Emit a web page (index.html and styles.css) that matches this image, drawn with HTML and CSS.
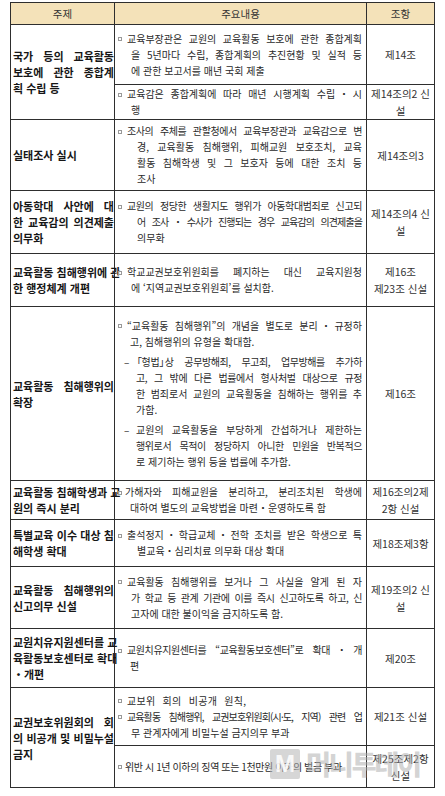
FILE: index.html
```html
<!DOCTYPE html>
<html lang="ko">
<head>
<meta charset="utf-8">
<title>교권보호 개정 주요내용</title>
<link rel="stylesheet" href="styles.css">
</head>
<body>
<div class="page">
<table class="law">
  <colgroup><col class="c1"><col class="c2"><col class="c3"></colgroup>
  <thead>
    <tr><th>주제</th><th>주요내용</th><th>조항</th></tr>
  </thead>
  <tbody>
    <tr class="r1a">
      <td class="topic" rowspan="2">
        <span class="ln j">국가 등의 교육활동</span>
        <span class="ln j">보호에 관한 종합계</span>
        <span class="ln">획 수립 등</span>
      </td>
      <td class="body">
        <span class="ln j"><i class="bl"></i>교육부장관은 교원의 교육활동 보호에 관한 종합계획</span>
        <span class="ln j ind">을 5년마다 수립, 종합계획의 추진현황 및 실적 등</span>
        <span class="ln ind">에 관한 보고서를 매년 국회 제출</span>
      </td>
      <td class="art">제14조</td>
    </tr>
    <tr class="r1b sub">
      <td class="body">
        <span class="ln j"><i class="bl"></i>교육감은 종합계획에 따라 매년 시행계획 수립・시</span>
        <span class="ln ind">행</span>
      </td>
      <td class="art">제14조의2 신<br>설</td>
    </tr>
    <tr class="r2">
      <td class="topic"><span class="ln">실태조사 실시</span></td>
      <td class="body">
        <span class="ln j t1"><i class="bl"></i>조사의 주체를 관할청에서 교육부장관과 교육감으로 변</span>
        <span class="ln j ind2">경, 교육활동 침해행위, 피해교원 보호조치, 교육</span>
        <span class="ln j ind2">활동 침해학생 및 그 보호자 등에 대한 조치 등</span>
        <span class="ln ind2">조사</span>
      </td>
      <td class="art">제14조의3</td>
    </tr>
    <tr class="r3">
      <td class="topic">
        <span class="ln j">아동학대 사안에 대</span>
        <span class="ln j">한 교육감의 의견제출</span>
        <span class="ln">의무화</span>
      </td>
      <td class="body">
        <span class="ln j t1"><i class="bl"></i>교원의 정당한 생활지도 행위가 아동학대범죄로 신고되</span>
        <span class="ln j ind2 t2">어 조사・수사가 진행되는 경우 교육감의 의견제출을</span>
        <span class="ln ind2">의무화</span>
      </td>
      <td class="art">제14조의4 신<br>설</td>
    </tr>
    <tr class="r4">
      <td class="topic">
        <span class="ln j">교육활동 침해행위에 관</span>
        <span class="ln">한 행정체계 개편</span>
      </td>
      <td class="body">
        <span class="ln j"><i class="bl"></i>학교교권보호위원회를 폐지하는 대신 교육지원청</span>
        <span class="ln ind">에 ‘지역교권보호위원회’를 설치함.</span>
      </td>
      <td class="art">제16조<br>제23조 신설</td>
    </tr>
    <tr class="r5">
      <td class="topic">
        <span class="ln j">교육활동 침해행위의</span>
        <span class="ln">확장</span>
      </td>
      <td class="body">
        <div class="para">
          <span class="ln j"><i class="bl"></i>“교육활동 침해행위”의 개념을 별도로 분리・규정하</span>
          <span class="ln ind3">고, 침해행위의 유형을 확대함.</span>
        </div>
        <div class="para dash">
          <span class="ln j t1"><i class="dh">–</i><span class="lb">「</span>형법<span class="rb">」</span>상 공무방해죄, 무고죄, 업무방해를 추가하</span>
          <span class="ln j ind4 t1">고, 그 밖에 다른 법률에서 형사처벌 대상으로 규정</span>
          <span class="ln j ind4">한 범죄로서 교원의 교육활동을 침해하는 행위를 추</span>
          <span class="ln ind4">가함.</span>
        </div>
        <div class="para dash">
          <span class="ln j"><i class="dh">–</i>교원의 교육활동을 부당하게 간섭하거나 제한하는</span>
          <span class="ln j ind4 t1">행위로서 목적이 정당하지 아니한 민원을 반복적으</span>
          <span class="ln ind4">로 제기하는 행위 등을 법률에 추가함.</span>
        </div>
      </td>
      <td class="art">제16조</td>
    </tr>
    <tr class="r6">
      <td class="topic">
        <span class="ln j">교육활동 침해학생과 교</span>
        <span class="ln">원의 즉시 분리</span>
      </td>
      <td class="body">
        <span class="ln j"><i class="bl sm"></i>가해자와 피해교원을 분리하고, 분리조치된 학생에</span>
        <span class="ln ind3">대하여 별도의 교육방법을 마련・운영하도록 함</span>
      </td>
      <td class="art">제16조의2제<br>2항 신설</td>
    </tr>
    <tr class="r7">
      <td class="topic">
        <span class="ln j">특별교육 이수 대상 침</span>
        <span class="ln">해학생 확대</span>
      </td>
      <td class="body">
        <span class="ln j"><i class="bl"></i>출석정지・학급교체・전학 조치를 받은 학생으로 특</span>
        <span class="ln ind2">별교육・심리치료 의무화 대상 확대</span>
      </td>
      <td class="art">제18조제3항</td>
    </tr>
    <tr class="r8">
      <td class="topic">
        <span class="ln j">교육활동 침해행위의</span>
        <span class="ln">신고의무 신설</span>
      </td>
      <td class="body">
        <span class="ln j"><i class="bl"></i>교육활동 침해행위를 보거나 그 사실을 알게 된 자</span>
        <span class="ln j ind t1">가 학교 등 관계 기관에 이를 즉시 신고하도록 하고, 신</span>
        <span class="ln ind">고자에 대한 불이익을 금지하도록 함.</span>
      </td>
      <td class="art">제19조의2 신<br>설</td>
    </tr>
    <tr class="r9">
      <td class="topic">
        <span class="ln j">교원치유지원센터를 교</span>
        <span class="ln j">육활동보호센터로 확대</span>
        <span class="ln">・개편</span>
      </td>
      <td class="body">
        <span class="ln j t1"><i class="bl"></i>교원치유지원센터를 “교육활동보호센터”로 확대・개</span>
        <span class="ln ind3">편</span>
      </td>
      <td class="art">제20조</td>
    </tr>
    <tr class="r10a">
      <td class="topic" rowspan="2">
        <span class="ln j">교권보호위원회의 회</span>
        <span class="ln j">의 비공개 및 비밀누설</span>
        <span class="ln">금지</span>
      </td>
      <td class="body">
        <span class="ln wide"><i class="bl"></i>교보위 회의 비공개 원칙,</span>
        <span class="ln j t2"><i class="bl"></i>교육활동 침해행위, 교권보호위원회(시·도, 지역) 관련 업</span>
        <span class="ln ind">무 관계자에게 비밀누설 금지의무 부과</span>
      </td>
      <td class="art">제21조 신설</td>
    </tr>
    <tr class="r10b sub">
      <td class="body">
        <span class="ln t1"><i class="bl sm"></i>위반 시 1년 이하의 징역 또는 1천만원 이하의 벌금 부과</span>
      </td>
      <td class="art">제25조제2항<br>신설</td>
    </tr>
  </tbody>
</table>
<div class="mark"><span class="mark-box">M</span><span class="mark-text">머니투데이</span></div>
</div>
</body>
</html>
```

FILE: styles.css
```css
html, body {
  margin: 0;
  padding: 0;
  background: #ffffff;
}
body {
  font-family: "Noto Sans CJK KR", "Noto Sans", sans-serif;
  color: #222;
}
.page {
  position: relative;
  width: 445px;
  height: 796px;
  padding: 2px 0 0 10px;
  box-sizing: border-box;
}
.law {
  border-collapse: collapse;
  table-layout: fixed;
  width: 424px;
  font-size: 10px;
  line-height: 16px;
}
.c1 { width: 104px; }
.c2 { width: 252px; }
.c3 { width: 68px; }

.law th, .law td {
  border: 1px solid #2e2e2e;
  padding: 0;
  vertical-align: middle;
}
.law th {
  height: 21px;
  background: #f4e2b9;
  font-weight: normal;
  color: #333;
  font-size: 10.5px;
  text-align: center;
}
.law tr.sub td {
  border-top: 1px dotted #555;
}
.topic {
  padding: 0 0 0 2px !important;
  font-weight: bold;
  font-size: 11px;
  color: #161616;
  white-space: nowrap;
}
.body {
  padding: 0 4px 0 2px !important;
  color: #2a2a2a;
}
.art {
  text-align: center;
  color: #333;
  font-size: 10.5px;
  line-height: 17px;
}
.ln {
  display: block;
  white-space: nowrap;
  text-align: left;
}
.ln.j {
  text-align: justify;
  text-align-last: justify;
}
.ind { margin-left: 14px; }
.ind2 { margin-left: 20px; }
.ind3 { margin-left: 13px; }
.ind4 { margin-left: 12px; }
.t1 { letter-spacing: -0.4px; }
.t2 { letter-spacing: -0.9px; }
.wide { word-spacing: 4px; letter-spacing: 0.3px; }
.lb { display: inline-block; margin-left: -4px; }
.rb { display: inline-block; margin-right: -4px; }
.bl {
  display: inline-block;
  width: 2px;
  height: 2px;
  border: 1px solid #999;
  margin: 0 5px 1px 1px;
  vertical-align: middle;
  letter-spacing: 0;
}
.bl.sm { margin-right: 3px; }
.dh {
  font-style: normal;
  display: inline-block;
  width: 12px;
}
.para + .para { margin-top: 4px; }
.dash { padding-left: 7px; }

.r1a td { height: 59px; }
.r1b td { height: 32px; }
.r2 td { height: 70px; }
.r3 td { height: 62px; }
.r4 td { height: 52px; }
.r5 td { height: 173px; }
.r6 td { height: 38px; }
.r7 td { height: 46px; }
.r8 td { height: 61px; }
.r9 td { height: 58px; }
.r10a td { height: 57px; }
.r10b td { height: 41px; }

.mark {
  position: absolute;
  left: 270px;
  top: 749px;
  display: flex;
  align-items: center;
  gap: 6px;
  pointer-events: none;
}
.mark-box {
  display: inline-block;
  width: 30px;
  height: 30px;
  border-radius: 2px;
  background: rgba(180, 180, 180, 0.55);
  color: rgba(255, 255, 255, 0.9);
  font-family: "Liberation Sans", sans-serif;
  font-weight: bold;
  font-size: 24px;
  line-height: 30px;
  text-align: center;
}
.mark-text {
  font-family: "Noto Sans CJK KR", sans-serif;
  font-weight: 900;
  font-size: 27px;
  line-height: 30px;
  letter-spacing: -2px;
  color: rgba(175, 175, 175, 0.55);
}
```
